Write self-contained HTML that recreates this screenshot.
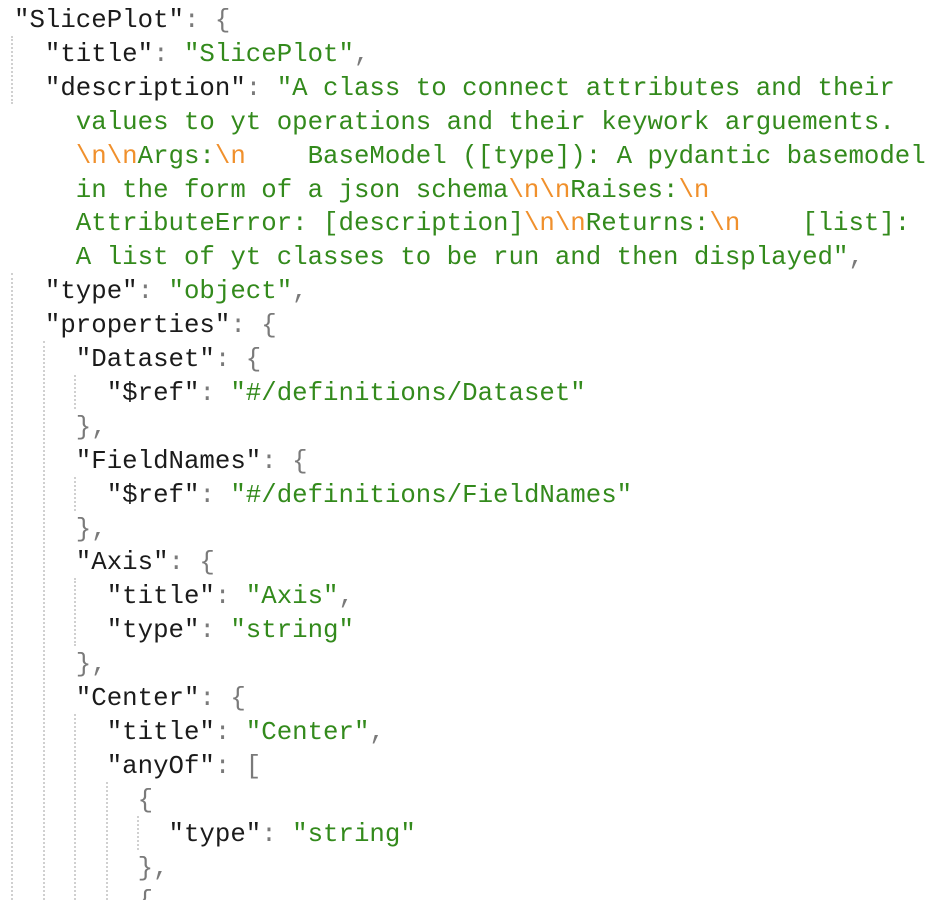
<!DOCTYPE html>
<html><head><meta charset="utf-8"><style>
html,body{margin:0;padding:0;background:#fff;width:940px;height:900px;overflow:hidden}
.wrap{position:relative;width:940px;height:900px}
.l{position:absolute;left:14px;height:34px;line-height:34px;white-space:pre;font-family:"Liberation Mono",monospace;font-size:25.75px;color:#1b1b1b}
.s{color:#338a1c}.e{color:#f0902c}.p{color:#7a7a7a}
.g{position:absolute;width:0;border-left:2px dotted #d0d0d0}
</style></head><body><div class="wrap">
<div class="g" style="left:11px;top:36px;height:68px"></div>
<div class="g" style="left:11px;top:273px;height:627px"></div>
<div class="g" style="left:43px;top:341px;height:559px"></div>
<div class="g" style="left:74px;top:375px;height:34px"></div>
<div class="g" style="left:74px;top:477px;height:34px"></div>
<div class="g" style="left:74px;top:578px;height:68px"></div>
<div class="g" style="left:74px;top:714px;height:186px"></div>
<div class="g" style="left:106px;top:782px;height:118px"></div>
<div class="g" style="left:137px;top:816px;height:34px"></div>

<div class="l" style="top:4px">"SlicePlot"<span class="p">: {</span></div>
<div class="l" style="top:38px">  "title"<span class="p">: </span><span class="s">"SlicePlot"</span><span class="p">,</span></div>
<div class="l" style="top:72px">  "description"<span class="p">: </span><span class="s">"A class to connect attributes and their</span></div>
<div class="l s" style="top:106px">    values to yt operations and their keywork arguements.</div>
<div class="l s" style="top:140px">    <span class="e">\n\n</span>Args:<span class="e">\n</span>    BaseModel ([type]): A pydantic basemodel</div>
<div class="l s" style="top:174px">    in the form of a json schema<span class="e">\n\n</span>Raises:<span class="e">\n</span></div>
<div class="l s" style="top:207px">    AttributeError: [description]<span class="e">\n\n</span>Returns:<span class="e">\n</span>    [list]:</div>
<div class="l s" style="top:241px">    A list of yt classes to be run and then displayed"<span class="p">,</span></div>
<div class="l" style="top:275px">  "type"<span class="p">: </span><span class="s">"object"</span><span class="p">,</span></div>
<div class="l" style="top:309px">  "properties"<span class="p">: {</span></div>
<div class="l" style="top:343px">    "Dataset"<span class="p">: {</span></div>
<div class="l" style="top:377px">      "$ref"<span class="p">: </span><span class="s">"#/definitions/Dataset"</span></div>
<div class="l p" style="top:411px">    },</div>
<div class="l" style="top:445px">    "FieldNames"<span class="p">: {</span></div>
<div class="l" style="top:479px">      "$ref"<span class="p">: </span><span class="s">"#/definitions/FieldNames"</span></div>
<div class="l p" style="top:513px">    },</div>
<div class="l" style="top:546px">    "Axis"<span class="p">: {</span></div>
<div class="l" style="top:580px">      "title"<span class="p">: </span><span class="s">"Axis"</span><span class="p">,</span></div>
<div class="l" style="top:614px">      "type"<span class="p">: </span><span class="s">"string"</span></div>
<div class="l p" style="top:648px">    },</div>
<div class="l" style="top:682px">    "Center"<span class="p">: {</span></div>
<div class="l" style="top:716px">      "title"<span class="p">: </span><span class="s">"Center"</span><span class="p">,</span></div>
<div class="l" style="top:750px">      "anyOf"<span class="p">: [</span></div>
<div class="l p" style="top:784px">        {</div>
<div class="l" style="top:818px">          "type"<span class="p">: </span><span class="s">"string"</span></div>
<div class="l p" style="top:852px">        },</div>
<div class="l p" style="top:885px">        {</div>
</div></body></html>
